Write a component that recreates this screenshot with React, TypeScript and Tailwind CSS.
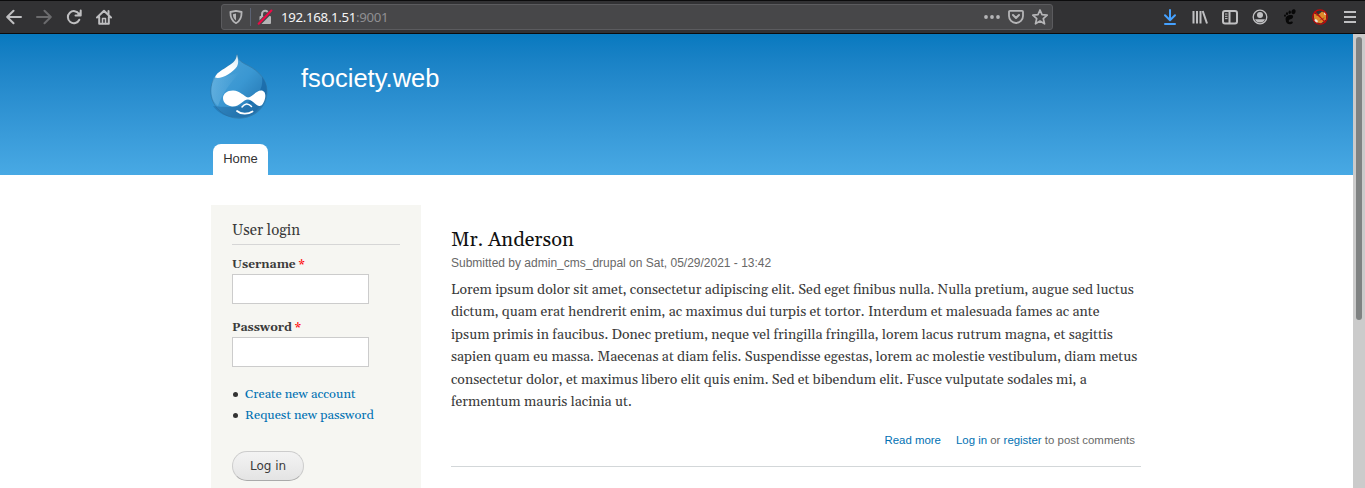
import type { ReactNode } from "react";

const serif = "font-['Georgia','Gelasio','Liberation_Serif',serif]";
const sans = "font-['Liberation_Sans',sans-serif]";

function Glyph({ children, className = "" }: { children: ReactNode; className?: string }) {
  return (
    <svg viewBox="0 0 16 16" className={"block size-4 shrink-0 " + className} fill="none" stroke="currentColor" strokeWidth="2" strokeLinecap="round" strokeLinejoin="round">
      {children}
    </svg>
  );
}

const Back = () => <Glyph><path d="M15 8H1.500M7.500 1.800 1.200 8l6.300 6.200" /></Glyph>;
const Forward = () => <Glyph className="text-[#6b6b6d]"><path d="M1 8h13.500M8.500 1.800 14.800 8l-6.300 6.200" /></Glyph>;
const Reload = () => (
  <Glyph>
    <path d="M13 5A6 6 0 1 0 13.300 10.700" />
    <path d="M14.700 1.500v5H9.500" />
    <path d="M10.500 6.500h4v-4z" fill="currentColor" stroke="none" />
  </Glyph>
);
const Home = () => (
  <Glyph>
    <path d="M1 8.500 8 1.700l7 6.800M3.200 8v6.800h9.600V8" />
    <path d="M6.500 14.500V9.500h3v5" strokeWidth="1.500" />
    <path d="M12.500 2v3" />
  </Glyph>
);
const Shield = () => (
  <Glyph className="text-[#b5b5b7]">
    <path d="M8 1.800 13.600 3C13.700 9 12 12.200 8 14.200 4 12.200 2.300 9 2.400 3Z" strokeWidth="1.800" />
    <path d="M8 4.600v7C5.900 10 5 8.300 4.900 5.300Z" fill="currentColor" stroke="none" />
  </Glyph>
);
const Lock = () => (
  <Glyph className="text-[#b5b5b7]">
    <rect x="2.500" y="7" width="11.500" height="8" rx="1" fill="currentColor" stroke="none" />
    <path d="M5 7.500V5a3.200 3.200 0 0 1 6.400 0v2.500" />
    <path d="M1.700 15 14.400 2.100" stroke="#47474a" strokeWidth="4" />
    <path d="M1.700 14.700 14.400 1.500" stroke="#ed0945" />
  </Glyph>
);
const Dots = () => (
  <Glyph>
    <g fill="currentColor" stroke="none">
      <circle cx="2" cy="8" r="1.900" />
      <circle cx="8" cy="8" r="1.900" />
      <circle cx="14" cy="8" r="1.900" />
    </g>
  </Glyph>
);
const Pocket = () => (
  <Glyph>
    <path d="M2 1.800h12a1 1 0 0 1 1 1V7a7 7 0 0 1-14 0V2.800a1 1 0 0 1 1-1Z" strokeWidth="1.800" />
    <path d="m5 6 3 3 3-3" />
  </Glyph>
);
const Star = () => (
  <Glyph>
    <path d="m8 1 2 4.700 5.200.5-3.900 3.400 1.200 5.200L8 12l-4.500 2.800 1.200-5.200L.8 6.200 6 5.700Z" strokeWidth="1.700" />
  </Glyph>
);
const Download = () => (
  <Glyph className="text-[#45a1ff]"><path d="M8 1v10M3 6.300 8 11.300l5-5M3 15h10" /></Glyph>
);
const Library = () => (
  <Glyph><path d="M1.500 2v12.500M5 2v12.500M8.500 2v12.500M10.700 2 15 14.500" strokeLinecap="butt" /></Glyph>
);
const Sidebar = () => (
  <Glyph>
    <rect x="1" y="2" width="14" height="12.500" rx="2" />
    <path d="M7.500 2v12" />
    <path d="M3 5h2.500M3 7.300h2.500M3 9.600h2.500" strokeWidth="1" strokeLinecap="butt" />
  </Glyph>
);
const Account = () => (
  <Glyph>
    <circle cx="8" cy="8" r="6.800" strokeWidth="1.300" />
    <circle cx="8" cy="6" r="3" fill="currentColor" stroke="none" />
    <path d="M3 10.300h10A5.500 5.500 0 0 1 3 10.300Z" fill="currentColor" stroke="none" />
  </Glyph>
);
const Foot = () => (
  <Glyph className="text-[#080808]">
    <g fill="currentColor" stroke="none">
      <ellipse cx="11.500" cy="2.700" rx="2" ry="2.500" transform="rotate(20 11.500 2.700)" />
      <ellipse cx="7.700" cy="3.300" rx="1.200" ry="1.700" />
      <ellipse cx="5" cy="4.700" rx="1.100" ry="1.400" />
      <ellipse cx="3" cy="6.700" rx="1" ry="1.100" />
      <path d="M9.500 6C5.500 5.800 3.300 8 3.600 10.500 3.800 14 6 15.500 8.300 15.300c2.600-.3 3.200-2.300 1.800-2.800-1.300-.5-1.700.7-2.700.4-1.400-.5-.7-2.400 1-2.600 2.600-.3 4-3.900 1.100-4.300Z" />
    </g>
  </Glyph>
);
const Fox = () => (
  <Glyph>
    <path d="M2 4.500 6 6l4-3.500 4 2v6L9 14.500 3.500 13 2 9Z" fill="#e08a2a" stroke="none" />
    <path d="m2 11 2-1 2 2-1 2-2.300-1.500ZM12.300 3l2 3-2.300-.5ZM8 10l3-1-1 2Z" fill="#eee6dc" stroke="none" />
    <path d="m4 6 4 1M8 11l4-2" stroke="#98551c" strokeWidth="1" />
    <circle cx="8" cy="8" r="7.200" stroke="#c50909" strokeWidth="1.300" />
    <path d="m3 3 10 10" stroke="#c50909" strokeWidth="1.100" />
  </Glyph>
);
const Menu = () => <Glyph><path d="M2 3h12M2 8h12M2 13h12" strokeLinecap="butt" /></Glyph>;

function Toolbar() {
  return (
    <div className="flex h-[34px] shrink-0 items-center border-y border-[#0c0c0d] bg-[#323234] text-[#bfbfc1]">
      <div className="flex w-[221px] shrink-0 gap-[14px] pl-[6px]">
        <Back /><Forward /><Reload /><Home />
      </div>
      <div className="flex h-[26px] w-[832px] shrink-0 items-center rounded-[3px] border border-[#5b5b5e] bg-[#474749] pl-[6px]">
        <Shield />
        <div className="mr-[6px] ml-[6px] h-[18px] w-px bg-[#5c6374]" />
        <Lock />
        <div className="ml-[8px] font-['Noto_Sans',sans-serif] text-[13.300px] leading-5 tracking-[-0.350px] text-[#f4f4f5]">192.168.1.51<span className="text-[#8f8f92]">:9001</span></div>
        <div className="ml-auto flex gap-2 pr-1 text-[#b5b5b7]"><Dots /><Pocket /><Star /></div>
      </div>
      <div className="ml-auto flex gap-[14px] pr-[7px]">
        <Download /><Library /><Sidebar /><Account /><Foot /><Fox /><Menu />
      </div>
    </div>
  );
}

function Logo() {
  return (
    <svg viewBox="0 0 58 66" className="block h-[66px] w-[58px]">
      <defs>
        <linearGradient id="drop" x1="0" y1="0" x2="1" y2="1">
          <stop offset="0" stopColor="#50a5d9" />
          <stop offset=".5" stopColor="#3a97d2" />
          <stop offset="1" stopColor="#1c6ba7" />
        </linearGradient>
        <linearGradient id="rim" x1="0" y1="0" x2="1" y2="0">
          <stop offset="0" stopColor="#79bde6" />
          <stop offset="1" stopColor="#79bde6" stopOpacity="0" />
        </linearGradient>
        <linearGradient id="shine" x1=".8" y1="0" x2=".2" y2="1">
          <stop offset="0" stopColor="#fff" stopOpacity=".8" />
          <stop offset=".5" stopColor="#fff" />
          <stop offset="1" stopColor="#fff" />
        </linearGradient>
      </defs>
      <path d="M27 .500c1 6 5 8 11 11C49 17 57 26 57 37.500c0 16-13 26.700-28 26.700S.700 52.500.700 37C.700 26 8 18.500 16 13.500c6-4 10-6 11-13Z" fill="url(#drop)" stroke="#347ba9" strokeWidth=".8" />
      <path d="M4 23C-1 38 2 47 8 52c4-12 10-20 22-34-12 4-22 7-26 5Z" fill="url(#rim)" opacity=".5" />
      <path d="M52 23c2 16-9 20-16 28 10-3 17-1 20-9 2-8 0-14-4-19Z" fill="#1969a8" opacity=".8" />
      <path d="M3 52c15 2 33 1 49-4-5 12-14 15.500-24 15.500C16 63.500 8 59 3 52Z" fill="#185f99" opacity=".4" />
      <path d="M27 .500c1 5 2 8 0 12-5 7-16 13-22 11 1-4 6-7 11-10 6-4 10-6 11-13Z" fill="url(#shine)" />
      <path d="M23 36.500c7 0 11 6 15 7 4 0 8-7 13-7 4 0 5 4 4 8-1 4-3 8-6 7.500-4-1-7-6.500-11-6.500-5 0-8 7.500-16 7-6-1-9-4.500-9-8.500s4-7.500 10-7.500Z" fill="#fff" />
      <path d="M32 53c3-4 6-4 9.500-.5" stroke="#fff" strokeWidth="1.500" fill="none" strokeLinecap="round" />
      <path d="M27 57c4 3.500 11 3.500 15.500.5" stroke="#fff" strokeWidth="1.800" fill="none" strokeLinecap="round" />
    </svg>
  );
}

function Header() {
  return (
    <header className={"h-[141px] bg-linear-to-b from-[#0779bf] to-[#48a9e4] pl-[210px] " + sans}>
      <div className="flex h-[110px] pt-5">
        <Logo />
        <h1 className="ml-[33px] pt-[9px] text-[25.500px] leading-[30px] text-white">fsociety.web</h1>
      </div>
      <div className="ml-[3px] h-[31px] w-[55px] rounded-t-[8px] bg-white pt-[5px] text-center text-[13px] leading-5 text-[#333]">Home</div>
    </header>
  );
}

function Field({ label }: { label: string }) {
  return (
    <div className="mb-[14px]">
      <div className="h-[18px] text-[12px] leading-5 font-bold whitespace-nowrap">{label} <span className="text-[#f00]">*</span></div>
      <input className="mt-px block h-[30px] w-[137px] border border-[#ccc] bg-white" aria-label={label} />
    </div>
  );
}

function Login() {
  return (
    <aside className={"h-[283px] w-[210px] shrink-0 bg-[#f6f6f2] px-[21px] pt-[15px] text-[#3b3b3b] " + serif}>
      <h2 className="mb-[10px] h-[25px] border-b border-[#d6d6d6] text-[15px] leading-[22px]">User login</h2>
      <Field label="Username" />
      <Field label="Password" />
      <ul className="mt-[17px] text-[12.800px] leading-[21px] whitespace-nowrap text-[#0071b3]">
        <li className="flex items-center"><span className="mr-[7px] ml-px size-[5px] rounded-full bg-[#333]" />Create new account</li>
        <li className="flex items-center"><span className="mr-[7px] ml-px size-[5px] rounded-full bg-[#333]" />Request new password</li>
      </ul>
      <button className="mt-[25px] block h-[30px] w-[72px] rounded-full border border-[#ccc] border-b-[#aaa] bg-linear-to-b from-[#f3f3f3] to-[#e4e4e4] font-['DejaVu_Sans',sans-serif] text-[12px]">Log in</button>
    </aside>
  );
}

function Article() {
  return (
    <article className={"ml-[30px] h-[262px] w-[690px] border-b border-[#d3d7d9] pt-[23px] whitespace-nowrap text-[#3b3b3b] " + serif}>
      <h2 className="h-6 text-[20px] leading-6 text-[#111]">Mr. Anderson</h2>
      <p className={"mt-px h-5 text-[12px] leading-5 text-[#686868] " + sans}>Submitted by admin_cms_drupal on Sat, 05/29/2021 - 13:42</p>
      <div className="mt-[6px] text-[14px] leading-[22.400px]">
        <p>Lorem ipsum dolor sit amet, consectetur adipiscing elit. Sed eget finibus nulla. Nulla pretium, augue sed luctus</p>
        <p>dictum, quam erat hendrerit enim, ac maximus dui turpis et tortor. Interdum et malesuada fames ac ante</p>
        <p>ipsum primis in faucibus. Donec pretium, neque vel fringilla fringilla, lorem lacus rutrum magna, et sagittis</p>
        <p>sapien quam eu massa. Maecenas at diam felis. Suspendisse egestas, lorem ac molestie vestibulum, diam metus</p>
        <p>consectetur dolor, et maximus libero elit quis enim. Sed et bibendum elit. Fusce vulputate sodales mi, a</p>
        <p>fermentum mauris lacinia ut.</p>
      </div>
      <div className={"mt-[17px] flex justify-end gap-[15px] pr-[6px] text-[11.430px] leading-5 text-[#686868] " + sans}>
        <a className="text-[#0071b3]">Read more</a>
        <span><a className="text-[#0071b3]">Log in</a> or <a className="text-[#0071b3]">register</a> to post comments</span>
      </div>
    </article>
  );
}

export default function App() {
  return (
    <div className="flex h-[488px] w-[1365px] flex-col overflow-hidden bg-white">
      <Toolbar />
      <div className="flex h-[454px]">
        <main className="w-[1353px] shrink-0">
          <Header />
          <div className="flex pt-[30px] pl-[211px]">
            <Login />
            <Article />
          </div>
        </main>
        <div className="w-3 shrink-0 bg-[#cbcbcb] pt-[3px] pl-[3px]">
          <div className="h-[283px] w-[6px] rounded-full bg-[#7f8282]" />
        </div>
      </div>
    </div>
  );
}
